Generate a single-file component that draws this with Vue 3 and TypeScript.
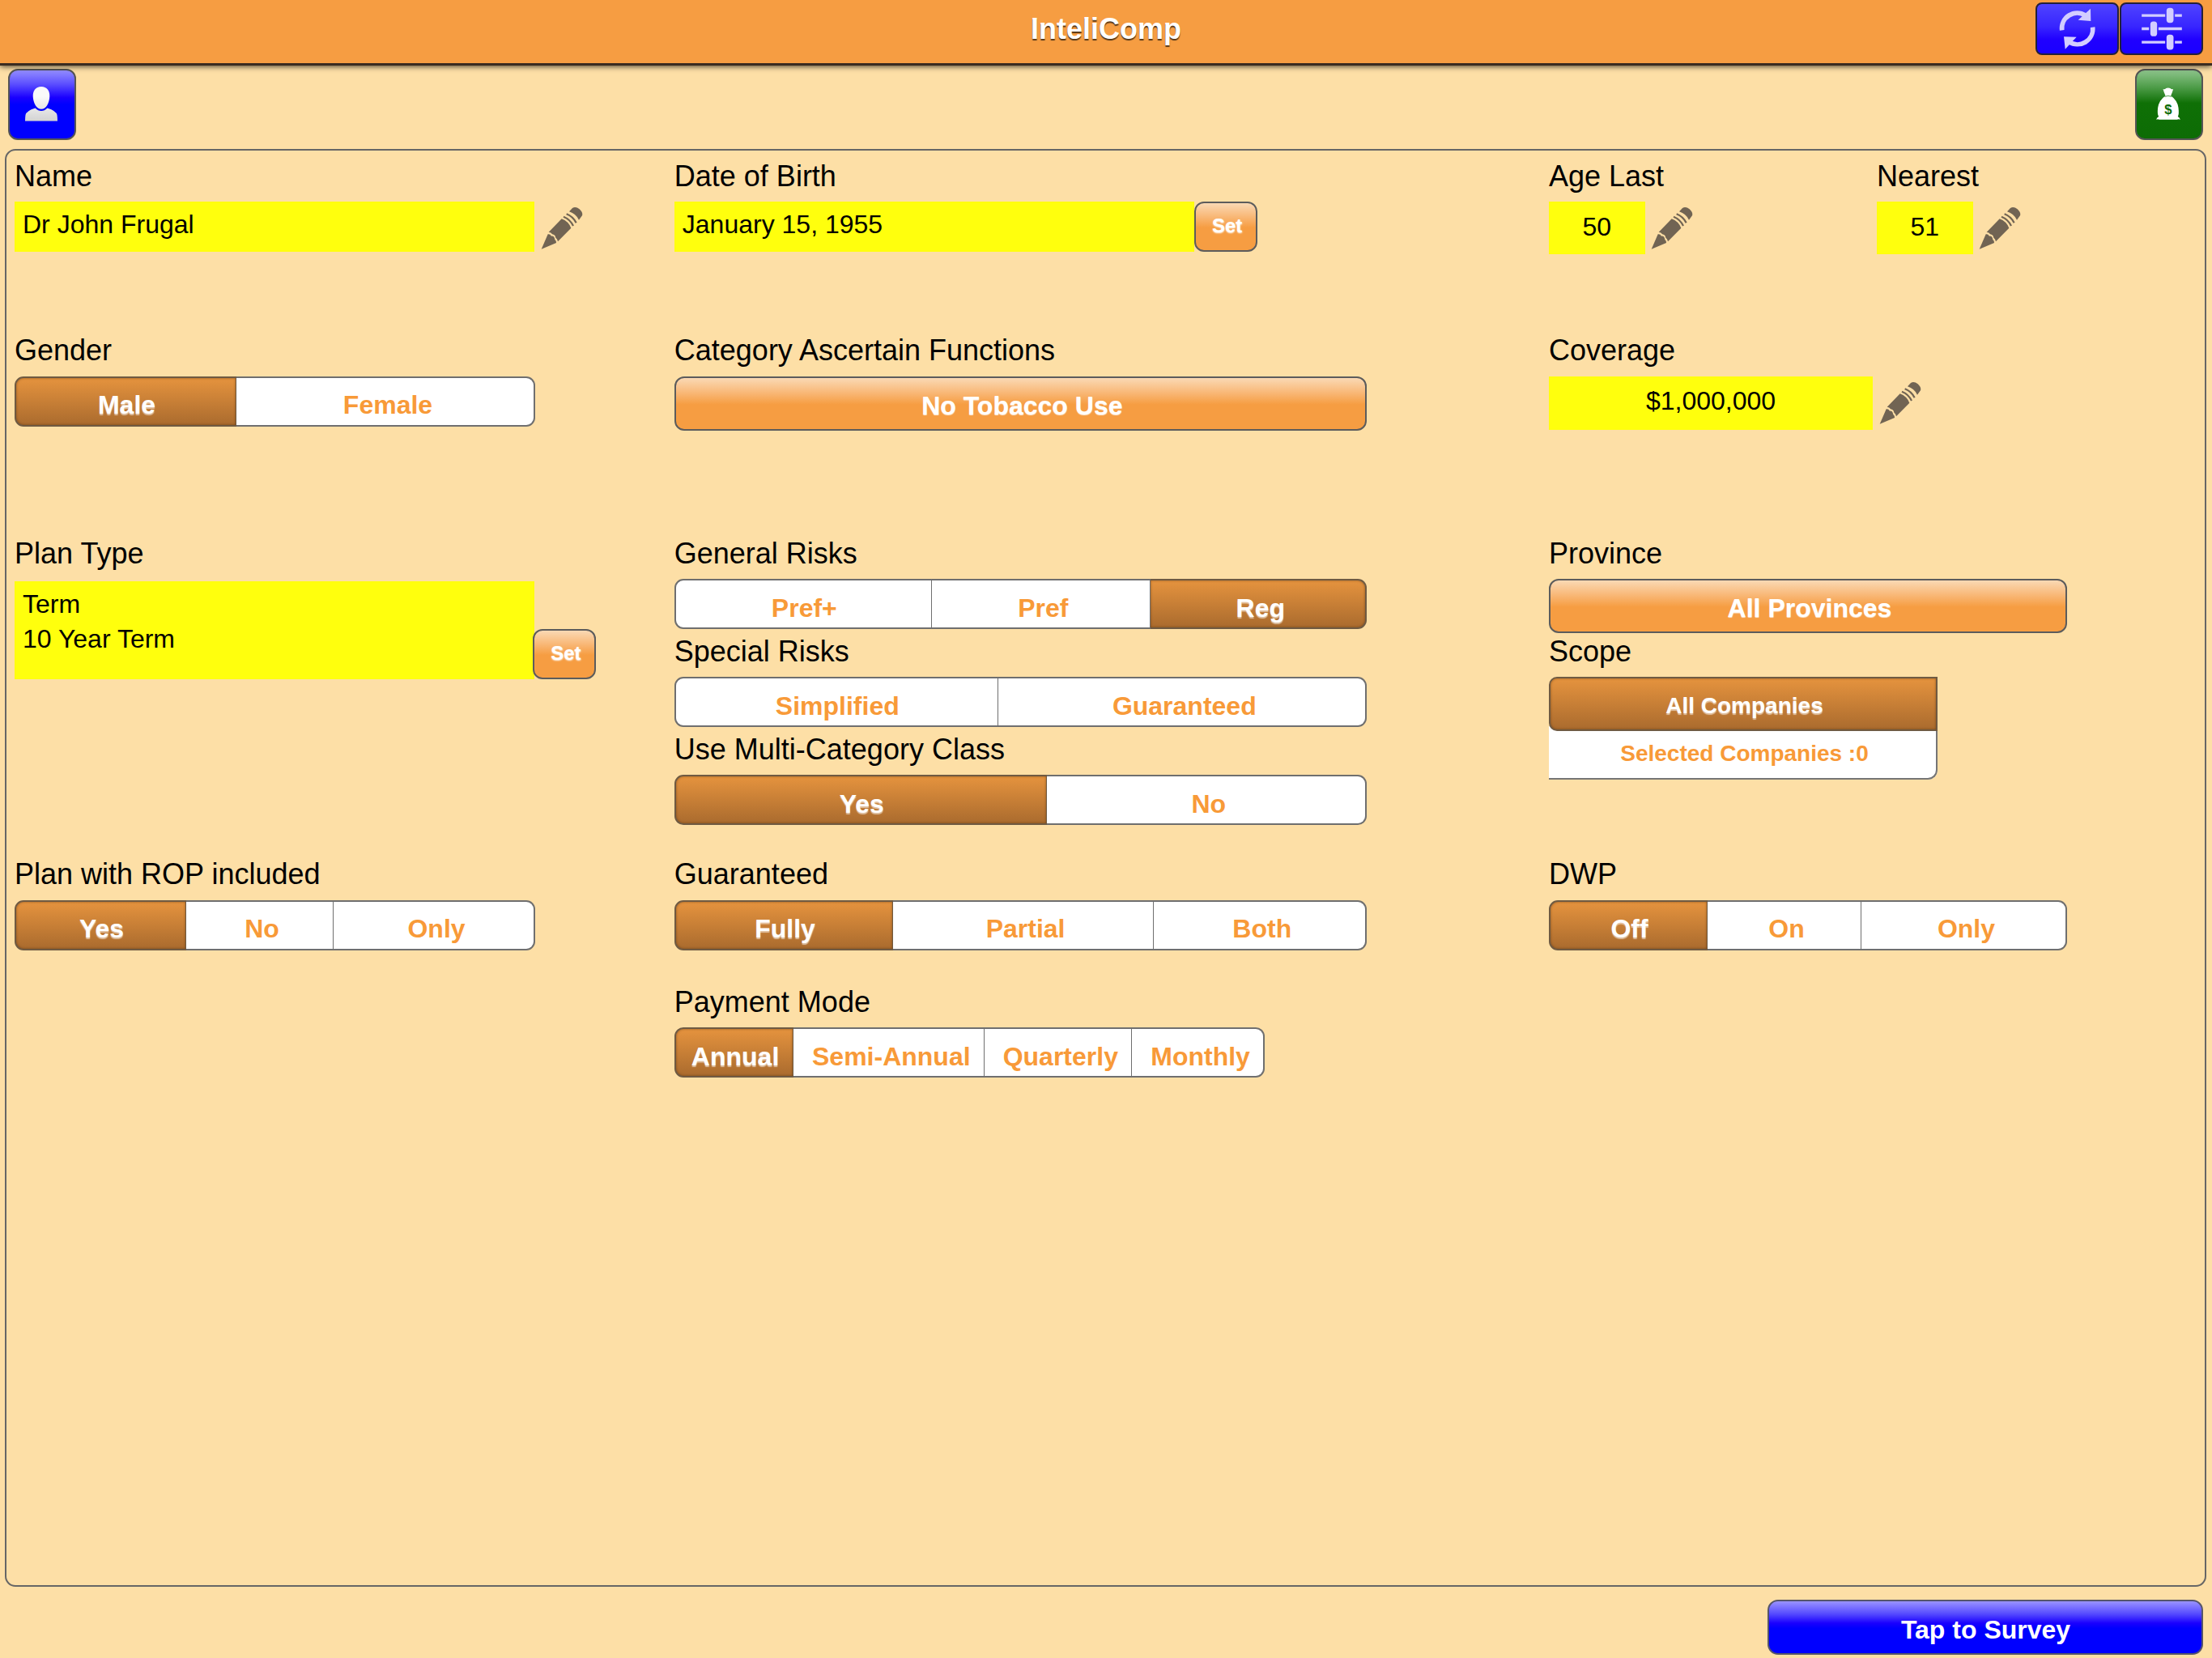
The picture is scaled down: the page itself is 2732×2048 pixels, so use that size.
<script setup lang="ts">
import { defineComponent, h } from 'vue'

interface Segment {
  text: string
  width: number
  on?: boolean
}

interface Choice {
  label: string
  segments: Segment[]
}

const gender: Choice = {
  label: 'Gender',
  segments: [
    { text: 'Male', width: 274, on: true },
    { text: 'Female', width: 369 },
  ],
}

const risks: Choice[] = [
  {
    label: 'General Risks',
    segments: [
      { text: 'Pref+', width: 318 },
      { text: 'Pref', width: 270 },
      { text: 'Reg', width: 267, on: true },
    ],
  },
  {
    label: 'Special Risks',
    segments: [
      { text: 'Simplified', width: 400 },
      { text: 'Guaranteed', width: 455 },
    ],
  },
  {
    label: 'Use Multi-Category Class',
    segments: [
      { text: 'Yes', width: 460, on: true },
      { text: 'No', width: 395 },
    ],
  },
]

const rop: Choice = {
  label: 'Plan with ROP included',
  segments: [
    { text: 'Yes', width: 212, on: true },
    { text: 'No', width: 182 },
    { text: 'Only', width: 249 },
  ],
}

const guaranteed: Choice = {
  label: 'Guaranteed',
  segments: [
    { text: 'Fully', width: 270.5, on: true },
    { text: 'Partial', width: 321.5 },
    { text: 'Both', width: 263 },
  ],
}

const dwp: Choice = {
  label: 'DWP',
  segments: [
    { text: 'Off', width: 196, on: true },
    { text: 'On', width: 190 },
    { text: 'Only', width: 254 },
  ],
}

const payment: Choice = {
  label: 'Payment Mode',
  segments: [
    { text: 'Annual', width: 147.5, on: true },
    { text: 'Semi-Annual', width: 236 },
    { text: 'Quarterly', width: 182 },
    { text: 'Monthly', width: 163.5 },
  ],
}

const PencilIcon = defineComponent({
  setup: () => () =>
    h('svg', { width: 52, height: 53.3, viewBox: '14 765 156 160', fill: '#716453' }, [
      h('path', { d: 'M16 923 L40 868 Q48 866 53 875 Q64 874 66 888 Q72 892 71 900 Z' }),
      h('path', { d: 'M43 860 L91 811 Q116 820 126 845 L77 895 Q75 884 69 881 Q67 869 56 868 Q52 860 43 860 Z' }),
      h('path', {
        d: 'M98 803 Q123 813 134 837 M109 793 Q134 803 145 826',
        fill: 'none',
        stroke: '#716453',
        'stroke-width': 6.5,
      }),
      h('path', { d: 'M119 784 L131 771 Q143 764 157 775 Q171 788 167 799 L155 815 Q144 792 119 784 Z' }),
    ]),
})

const SegmentBar = defineComponent({
  props: { choice: { type: Object as () => Choice, required: true } },
  setup: (props) => () =>
    h(
      'div',
      { class: 'seg-bar' },
      props.choice.segments.map((s) =>
        h('span', { class: ['seg', { on: s.on }], style: { width: s.width + 'px' } }, s.text),
      ),
    ),
})
</script>

<template>
  <div class="app">
    <header class="title-bar">
      <h1>InteliComp</h1>
      <div class="tools">
        <span class="tool">
          <svg width="46.7" height="53.3" viewBox="305 30 140 160">
            <path d="M319 115 A57 57 0 0 1 406 60 M433 104 A57 57 0 0 1 345 158" fill="none" stroke="#d2cdff" stroke-width="17" />
            <path d="M425 35 L426 81 L379 77 Z M326 139 L373 140 L331 185 Z" fill="#d2cdff" />
          </svg>
        </span>
        <span class="tool">
          <svg width="50" height="53.3" viewBox="612.5 26.5 150 160" fill="#d2cdff">
            <path d="M613 52h87v10h-87z M736 52h26v10h-26z M613 101h27v10h-27z M675 101h87v10h-87z M613 151h87v10h-87z M736 151h26v10h-26z" />
            <rect x="705" y="29" width="26" height="55" rx="11" />
            <rect x="645" y="79" width="25" height="55" rx="11" />
            <rect x="705" y="128" width="26" height="56" rx="11" />
          </svg>
        </span>
      </div>
    </header>

    <nav class="sub-bar">
      <span class="square person">
        <svg width="42" height="44" viewBox="0 0 42 44">
          <defs>
            <linearGradient id="grey" x1="0" y1="0" x2="0" y2="44" gradientUnits="userSpaceOnUse">
              <stop offset="0.3" stop-color="#fafafa" />
              <stop offset="1" stop-color="#d2d2d2" />
            </linearGradient>
          </defs>
          <path d="M21 1 C28 1 31.5 6 31.3 13 C31 21 27 28.8 21 28.8 C15 28.8 11 21 10.7 13 C10.5 6 14 1 21 1 Z" fill="url(#grey)" />
          <path d="M13.5 27.5 Q17 31 21 31 Q25 31 28.5 27.5 Q39.5 31 40.5 36 Q41 39 41 43.5 H1 Q1 39 1.5 36 Q2.5 31 13.5 27.5 Z" fill="url(#grey)" />
        </svg>
      </span>
      <span class="square money">
        <svg width="30" height="40" viewBox="671.5 325 90 120">
          <path
            fill="#fff"
            d="M697 331 Q704 333 708 328 Q716 325 724 328 Q728 333 735 331 Q731 345 726 356 Q750 373 754 400 Q757 425 752 433 Q759 437 761 444 Q754 442 749 444 H683 Q678 442 672 444 Q674 437 681 433 Q675 425 678 400 Q682 373 706 356 Q701 345 697 331 Z"
          />
          <path d="M703 359 Q716 353 729 359" fill="none" stroke="#2f8a2a" stroke-width="2.5" />
          <text x="716" y="425" text-anchor="middle" font-size="50" font-weight="bold" fill="#0d6c05">$</text>
        </svg>
      </span>
    </nav>

    <main class="panel">
      <section class="cell">
        <label>Name</label>
        <div class="line"><div class="value wide">Dr John Frugal</div><PencilIcon class="pencil" /></div>
      </section>
      <section class="cell">
        <label>Date of Birth</label>
        <div class="line"><div class="value wide">January 15, 1955</div><button class="set">Set</button></div>
      </section>
      <section class="cell pair">
        <div class="age">
          <label>Age Last</label>
          <div class="line"><div class="value small">50</div><PencilIcon class="pencil" /></div>
        </div>
        <div class="age">
          <label>Nearest</label>
          <div class="line"><div class="value small">51</div><PencilIcon class="pencil" /></div>
        </div>
      </section>

      <section class="cell">
        <label>{{ gender.label }}</label>
        <SegmentBar :choice="gender" />
      </section>
      <section class="cell">
        <label>Category Ascertain Functions</label>
        <button class="big tobacco">No Tobacco Use</button>
      </section>
      <section class="cell">
        <label>Coverage</label>
        <div class="line"><div class="value coverage">$1,000,000</div><PencilIcon class="pencil" /></div>
      </section>

      <section class="cell">
        <label>Plan Type</label>
        <div class="line plan">
          <div class="value wide tall">Term<br />10 Year Term</div>
          <button class="set plan-set">Set</button>
        </div>
      </section>
      <section class="cell stack">
        <div v-for="r in risks" :key="r.label">
          <label>{{ r.label }}</label>
          <SegmentBar :choice="r" />
        </div>
      </section>
      <section class="cell">
        <label>Province</label>
        <button class="big province">All Provinces</button>
        <label class="scope-label">Scope</label>
        <div class="scope">
          <div class="all">All Companies</div>
          <div class="selected">Selected Companies :0</div>
        </div>
      </section>

      <section class="cell">
        <label>{{ rop.label }}</label>
        <SegmentBar :choice="rop" />
      </section>
      <section class="cell">
        <label>{{ guaranteed.label }}</label>
        <SegmentBar :choice="guaranteed" />
      </section>
      <section class="cell">
        <label>{{ dwp.label }}</label>
        <SegmentBar :choice="dwp" />
      </section>

      <section class="cell payment">
        <label>{{ payment.label }}</label>
        <SegmentBar :choice="payment" />
      </section>
    </main>

    <footer>
      <button class="big survey">Tap to Survey</button>
    </footer>
  </div>
</template>

<style>
html,
body {
  margin: 0;
  background: #fddfa6;
}
</style>

<style scoped>
.app {
  width: 2732px;
  height: 2048px;
  overflow: hidden;
  display: flex;
  flex-direction: column;
  background: #fddfa6;
  color: #000;
  font-family: 'Liberation Sans', Arial, Helvetica, sans-serif;
}

button {
  display: block;
  box-sizing: border-box;
  font-family: inherit;
  margin: 0;
}

.title-bar {
  position: relative;
  z-index: 1;
  box-sizing: border-box;
  flex: none;
  height: 81px;
  display: grid;
  grid-template-columns: 1fr auto 1fr;
  align-items: start;
  background: #f69d42;
  border-bottom: 3px solid #3a2c20;
  box-shadow: 0 1px 7px rgba(0, 0, 0, 0.75);
}

h1 {
  grid-column: 2;
  margin: 0;
  padding-top: 16px;
  font-size: 36px;
  line-height: 40px;
  font-weight: bold;
  color: #fff;
  text-shadow: 0 1.5px 1px rgba(0, 0, 0, 0.65);
}

.tools {
  display: flex;
  justify-content: flex-end;
  gap: 1px;
  padding: 3px 11px 0 0;
}

.tool {
  box-sizing: border-box;
  width: 103px;
  height: 65px;
  display: flex;
  align-items: center;
  justify-content: center;
  border: 2px solid #23203a;
  border-radius: 8px;
  background: linear-gradient(#4f43ff, #3826ff 45%, #2000ff 72%, #1a00ff);
}

.sub-bar {
  flex: none;
  display: flex;
  justify-content: space-between;
  height: 88px;
  padding: 4px 11px 11px 10px;
}

.square {
  box-sizing: border-box;
  width: 84px;
  height: 88px;
  display: flex;
  align-items: center;
  justify-content: center;
  border: 2px solid #555;
  border-radius: 12px;
}

.person {
  padding: 0 3px 2px 0;
  background: linear-gradient(#938dff, #5c4fff 20%, #1a00ff 40%, #0000ff 50%);
}

.money {
  padding: 0 2px 2px 0;
  background: linear-gradient(#8dc48b, #4d9c48 25%, #0f7006 48%, #0d6c05);
}

.panel {
  box-sizing: border-box;
  flex: none;
  width: 2719px;
  height: 1776px;
  margin-left: 6px;
  padding: 11.2px 0 0 10px;
  display: grid;
  grid-template-columns: 814.8px 1080.2px 1fr;
  grid-template-rows: 215.3px 250.4px 396.7px 157.3px 1fr;
  border: 2px solid #666;
  border-radius: 13px;
}

.cell {
  min-width: 0;
}

.payment {
  grid-column: 2;
}

label {
  display: block;
  height: 52.2px;
  box-sizing: border-box;
  padding-top: 0.8px;
  font-size: 36px;
  line-height: 40px;
  white-space: nowrap;
}

.pair {
  display: flex;
}

.age {
  width: 406.5px;
}

.line {
  display: flex;
  align-items: flex-start;
}

.value {
  box-sizing: border-box;
  height: 61.5px;
  padding: 7px 0 0 10px;
  background: #ffff0d;
  font-size: 32px;
  line-height: 43.7px;
  white-space: nowrap;
}

.wide {
  width: 642.4px;
}

.tall {
  height: 121.3px;
}

.small {
  width: 118.6px;
  height: 65px;
  padding: 10px 0 0;
  text-align: center;
}

.coverage {
  width: 400px;
  height: 66.5px;
  padding: 9px 0 0;
  text-align: center;
}

.pencil {
  flex: none;
  margin: 6px 0 0 7.6px;
}

.set {
  flex: none;
  width: 78px;
  height: 62px;
  padding: 13px 0 0 3px;
  border: 2px solid #5c5c5c;
  border-radius: 12px;
  background: linear-gradient(#fad9b4, #f9bc7f 25%, #f69d42 52%);
  color: #fff;
  font-size: 24px;
  font-weight: bold;
  line-height: 30px;
  text-align: center;
  text-shadow: 0 1px 2px #fff;
}

.set,
.big {
  display: flex;
  justify-content: center;
  align-items: flex-start;
}

.plan {
  margin-top: 2.7px;
}

.plan-set {
  margin: 59px 0 0 -2px;
}

.big {
  height: 67px;
  padding: 14px 0 0 4px;
  border: 2px solid #5c5c5c;
  border-radius: 12px;
  background: linear-gradient(#fad9b4, #f9bc7f 25%, #f69d42 52%);
  color: #fff;
  font-size: 32px;
  font-weight: bold;
  line-height: 40px;
  text-shadow: 0 1px 1px rgba(255, 255, 255, 0.8);
}

.tobacco {
  width: 855px;
}

.province {
  width: 640px;
}

.scope-label {
  margin-top: 2px;
}

.stack {
  display: flex;
  flex-direction: column;
  gap: 7px;
}

:deep(.seg-bar) {
  display: flex;
  width: max-content;
  height: 62px;
}

:deep(.seg) {
  box-sizing: border-box;
  height: 62px;
  padding: 13.5px 0 0 6px;
  border: 2px solid #6f6f6f;
  border-width: 2px 1px 2px 0;
  background: #fff;
  color: #f89a38;
  font-size: 32px;
  font-weight: bold;
  line-height: 40px;
  text-align: center;
}

:deep(.seg:first-child) {
  padding-left: 2px;
  border-left-width: 2px;
  border-radius: 11px 0 0 11px;
}

:deep(.seg:last-child) {
  padding-left: 7px;
  border-right-width: 2px;
  border-radius: 0 11px 11px 0;
}

:deep(.seg.on),
.all {
  border-color: #6f5a42;
  background: linear-gradient(#e5933e, #aa6b2e);
  box-shadow: inset 0 0 3px rgba(60, 30, 0, 0.5);
  color: #fff;
  text-shadow: 0 2px 1px rgba(255, 255, 255, 0.55);
}

.scope {
  width: 480px;
  height: 126.5px;
  box-sizing: border-box;
  font-size: 28px;
  font-weight: bold;
  text-align: center;
  /* white shows only behind the rounded lower-left corner of the first option */
  background: linear-gradient(transparent 61px, #fff 61px);
  border-radius: 0 0 12px 0;
}

.all {
  box-sizing: border-box;
  height: 67px;
  padding: 14px 0 0 3px;
  border: 2px solid #6f5a42;
  border-radius: 10px 0 0 10px;
  line-height: 40px;
}

.selected {
  box-sizing: border-box;
  height: 59.5px;
  padding: 8px 0 0 5px;
  border: solid #757575;
  border-width: 0 2px 2px 0;
  border-radius: 0 0 12px 0;
  line-height: 40px;
  color: #f89a38;
}

footer {
  display: flex;
  justify-content: flex-end;
  padding: 16px 11px 0 0;
}

.survey {
  width: 538px;
  height: 68px;
  padding: 15px 0 0 1px;
  border-color: #55556a;
  border-radius: 13px;
  background: linear-gradient(#9a93ff, #5348ff 25%, #1a00ff 42%, #0000ff 52%);
  text-shadow: none;
}
</style>
